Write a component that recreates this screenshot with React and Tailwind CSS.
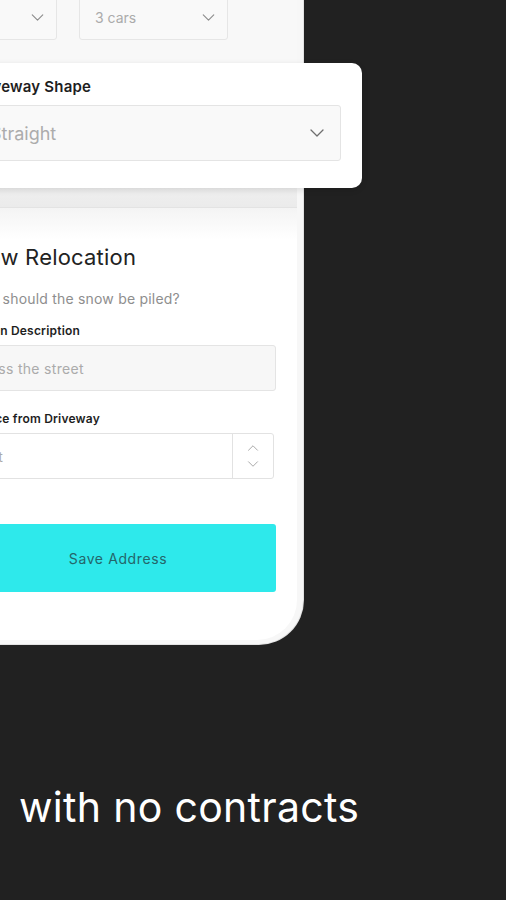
import React from "react";

const Chevron = ({ className = "", up = false }) => (
  <svg viewBox="0 0 14 8" className={className} fill="none" stroke="currentColor" strokeWidth="1.3" strokeLinecap="round" strokeLinejoin="round">
    {up ? <path d="M1 7 L7 1 L13 7" /> : <path d="M1 1 L7 7 L13 1" />}
  </svg>
);

export default function App() {
  return (
    <div
      className="relative w-[506px] h-[900px] overflow-hidden bg-[#212121]"
      style={{ fontFamily: "Inter, 'Noto Sans', sans-serif" }}
    >
      {/* Phone */}
      <div className="ml-[-60px] mt-[-52px] w-[363px] h-[696px] rounded-br-[44px] bg-[#f7f7f7] pr-[6px] pb-[4px] shadow-[0_0_0_1px_#e2e2e2]">
        <div className="h-full rounded-br-[40px] bg-white overflow-hidden flex flex-col">
          {/* top section (dimmed) */}
          <div className="bg-[#f8f8f8] pt-[46px] pl-[20px]">
            <div className="flex gap-[22px]">
              <div className="w-[97px] h-[46px] rounded-[3px] border border-[#e6e6e6] bg-[#f9f9f9] flex items-center justify-end pr-[12px] text-[#8c8c8c]">
                <Chevron className="w-[13px] h-[7px]" />
              </div>
              <div className="w-[149px] h-[46px] rounded-[3px] border border-[#e6e6e6] bg-[#f9f9f9] flex items-center justify-between pl-[15px] pr-[12px]">
                <span className="text-[14px] text-[#ababab]">3 cars</span>
                <Chevron className="w-[13px] h-[7px] text-[#8c8c8c]" />
              </div>
            </div>
            <div className="h-[148px]" />
          </div>
          <div className="h-[19px] bg-gradient-to-b from-[#efefef] to-[#ebebeb]" />
          <div className="h-px bg-[#e3e3e3]" />
          <div className="h-[32px] bg-gradient-to-b from-[#f4f4f4] to-white" />

          {/* Snow Relocation */}
          <div className="pl-[20px] pr-[21px] flex flex-col">
            <div className="text-[22px] leading-[28px] text-[#222] mt-[3px] tracking-[0.2px]">Snow Relocation</div>
            <div className="text-[14px] leading-[20px] text-[#8e8e8e] mt-[18px] ml-[-6px] tracking-[0.2px]">Where should the snow be piled?</div>
            <div className="text-[12px] leading-[16px] font-semibold text-[#1e1e1e] mt-[14px] ml-[-4px] tracking-[0.2px]">Location Description</div>
            <div className="mt-[6px] h-[46px] rounded-[3px] border border-[#e4e4e4] bg-[#f7f7f7] flex items-center pl-[5px]">
              <span className="text-[14px] text-[#ababab] tracking-[0.3px]">Across the street</span>
            </div>
            <div className="text-[12px] leading-[16px] font-semibold text-[#1e1e1e] mt-[20px] ml-[-3px] tracking-[0.2px]">Distance from Driveway</div>
            <div className="mt-[6px] h-[46px] w-[314px] rounded-[3px] border border-[#e2e2e2] bg-white flex">
              <div className="flex-1 flex items-center pl-[14px]">
                <span className="text-[14px] text-[#ababab]">10 ft</span>
              </div>
              <div className="w-[41px] border-l border-[#e2e2e2] flex flex-col items-center justify-center gap-[10px] text-[#a8a8a8]">
                <Chevron up className="w-[12px] h-[6px]" />
                <Chevron className="w-[12px] h-[6px]" />
              </div>
            </div>
            <button className="mt-[45px] h-[68px] w-full rounded-[3px] bg-[#2ee9eb] text-[14px] text-[#24666a] tracking-[0.6px]">
              Save Address
            </button>
          </div>
        </div>
      </div>

      {/* Zoomed popup card */}
      <div className="absolute left-[-50px] top-[63px] w-[412px] h-[125px] rounded-[10px] bg-white pl-[20px] pr-[21px] pt-[15px] shadow-[0_2px_6px_rgba(0,0,0,0.12)]">
        <div className="text-[15px] leading-[18px] font-semibold text-[#1e1e1e] ml-[1px] tracking-[0.2px]">Driveway Shape</div>
        <div className="mt-[9px] h-[56px] rounded-[3px] border border-[#e4e4e4] bg-[#f9f9f9] flex items-center justify-between pl-[19px] pr-[16px]">
          <span className="text-[18px] text-[#acacac]">Straight</span>
          <Chevron className="w-[14px] h-[8px] text-[#6f6f6f]" />
        </div>
      </div>

      {/* Caption */}
      <div className="mt-[139px] pl-[19px] text-[41px] leading-[48px] text-white tracking-[0.3px]">
        with no contracts
      </div>
    </div>
  );
}
